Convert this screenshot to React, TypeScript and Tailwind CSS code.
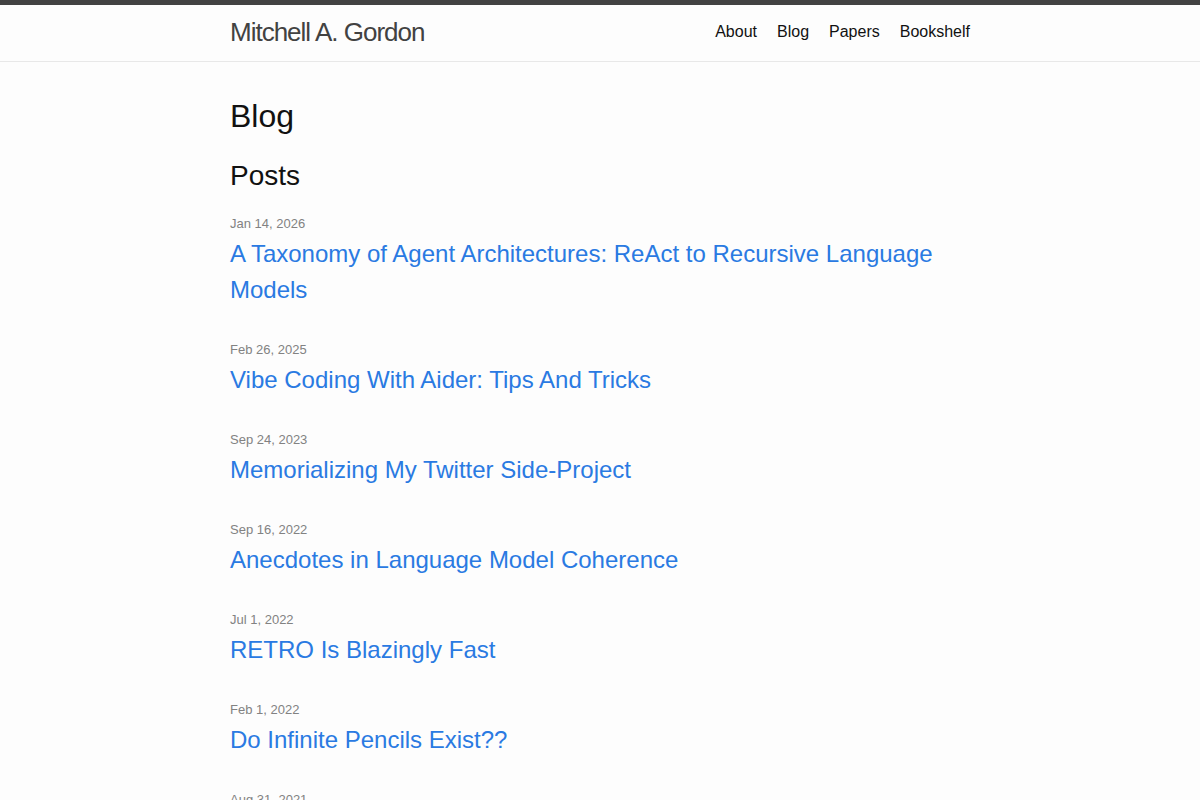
import React from "react";

const posts = [
  { date: "Jan 14, 2026", title: "A Taxonomy of Agent Architectures: ReAct to Recursive Language Models" },
  { date: "Feb 26, 2025", title: "Vibe Coding With Aider: Tips And Tricks" },
  { date: "Sep 24, 2023", title: "Memorializing My Twitter Side-Project" },
  { date: "Sep 16, 2022", title: "Anecdotes in Language Model Coherence" },
  { date: "Jul 1, 2022", title: "RETRO Is Blazingly Fast" },
  { date: "Feb 1, 2022", title: "Do Infinite Pencils Exist??" },
  { date: "Aug 31, 2021", title: "Notes on Model Compression" },
];

const nav = ["About", "Blog", "Papers", "Bookshelf"];

export default function App() {
  return (
    <div
      className="min-h-screen bg-[#fdfdfd] text-[#111111] text-[16px] leading-[24px]"
      style={{ fontFamily: '"Liberation Sans", Arial, Helvetica, sans-serif' }}
    >
      <header className="border-t-[5px] border-t-[#424242] border-b border-b-[#e8e8e8] min-h-[62px]">
        <div className="max-w-[800px] mx-auto px-[30px] flex justify-between items-start">
          <a
            href="#"
            className="text-[26px] leading-[54px] tracking-[-1px] font-light text-[#424242]"
          >
            Mitchell A. Gordon
          </a>
          <nav className="flex gap-[20px] leading-[54px] text-[16px]">
            {nav.map((n) => (
              <a key={n} href="#" className="text-[#111111]">
                {n}
              </a>
            ))}
          </nav>
        </div>
      </header>

      <main className="max-w-[800px] mx-auto px-[30px] py-[30px]">
        <h1 className="text-[32px] leading-[48px] mb-[15px]">Blog</h1>
        <h2 className="text-[28px] leading-[42px] mb-[15px]">Posts</h2>
        <ul className="list-none">
          {posts.map((p) => (
            <li key={p.date} className="mb-[30px]">
              <span className="block text-[13px] leading-[24px] text-[#828282]">{p.date}</span>
              <a href="#" className="block text-[24px] leading-[36px] text-[#2a7ae2]">
                {p.title}
              </a>
            </li>
          ))}
        </ul>
      </main>
    </div>
  );
}
